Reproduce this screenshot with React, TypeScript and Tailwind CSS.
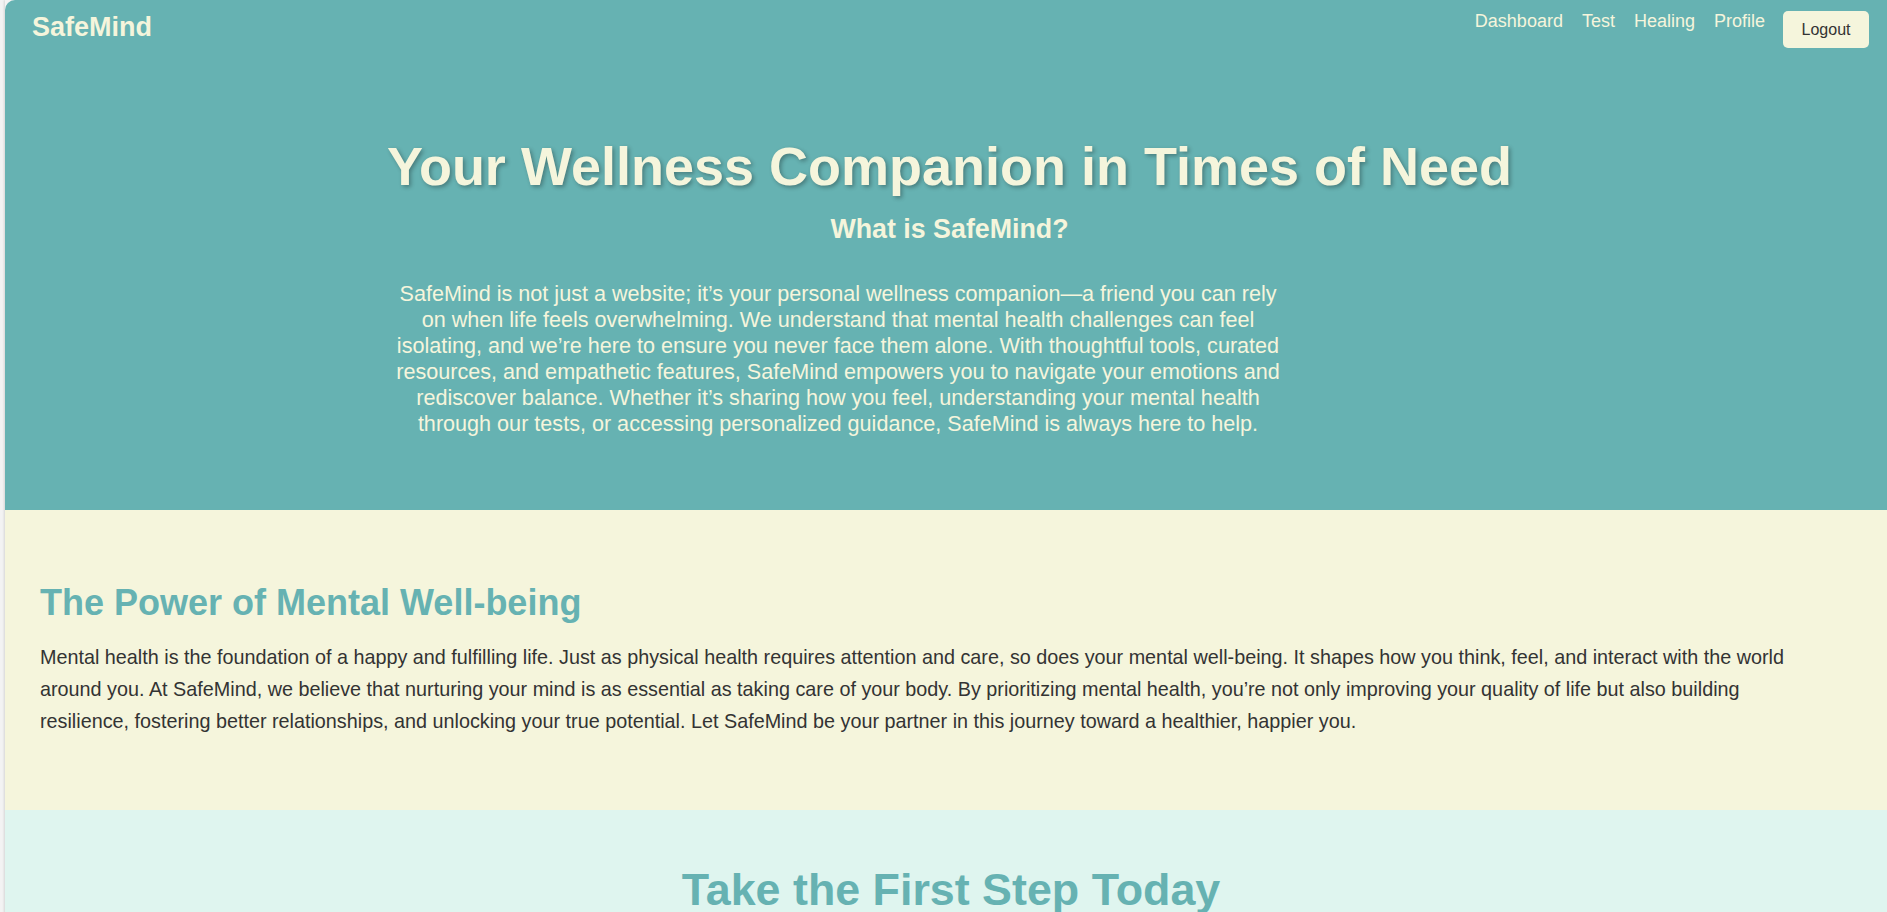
import React from 'react';

const navLinks = ['Dashboard', 'Test', 'Healing', 'Profile'];

const App = () => {
  return (
    <div className="min-h-screen bg-[#f3f3f3] pl-[5px] font-['Liberation_Sans',Arial,sans-serif]">
      <div className="shadow-[-1px_0_2px_rgba(0,0,0,0.12)]">
        {/* Hero + Nav */}
        <header className="bg-[#66b2b2] rounded-tl-[10px] pb-[73px]">
          <nav className="flex items-start justify-between pl-[27px] pr-[18px] pt-[11px]">
            <a href="#" className="text-[27px] font-bold text-[#f5f5dc] leading-[normal] mt-[1px]">
              SafeMind
            </a>
            <div className="flex items-start gap-[19px]">
              {navLinks.map((link) => (
                <a key={link} href="#" className="text-[18px] text-[#f5f5dc] leading-[normal]">
                  {link}
                </a>
              ))}
              <button className="w-[86px] h-[37px] flex items-center justify-center rounded-[5px] bg-[#f5f5dc] text-[16px] text-[#333] leading-[normal] -ml-[1px]">
                Logout
              </button>
            </div>
          </nav>

          <div className="flex flex-col items-center text-center text-[#f5f5dc] pl-[7px]">
            <h1 className="mt-[87px] text-[54px] font-bold leading-[normal] [text-shadow:2px_2px_4px_rgba(0,0,0,0.3)]">
              Your Wellness Companion in Times of Need
            </h1>
            <h2 className="mt-[17px] text-[26.8px] font-bold leading-[normal]">What is SafeMind?</h2>
          </div>

          <div className="flex justify-center">
            <p className="mt-[36px] mr-[216px] w-[900px] text-center text-[21.6px] leading-[26px] text-[#f5f5dc]">
              SafeMind is not just a website; it’s your personal wellness companion—a friend you can rely
              on when life feels overwhelming. We understand that mental health challenges can feel
              isolating, and we’re here to ensure you never face them alone. With thoughtful tools, curated
              resources, and empathetic features, SafeMind empowers you to navigate your emotions and
              rediscover balance. Whether it’s sharing how you feel, understanding your mental health
              through our tests, or accessing personalized guidance, SafeMind is always here to help.
            </p>
          </div>
        </header>

        {/* Mental well-being */}
        <section className="bg-[#f5f5dc] pl-[35px] pr-[81px] pt-[72px] pb-[73px]">
          <h2 className="text-[36px] font-bold leading-[normal] text-[#66b2b2]">The Power of Mental Well-being</h2>
          <p className="mt-[17px] text-[19.8px] leading-[32px] text-[#333]">
            Mental health is the foundation of a happy and fulfilling life. Just as physical health requires
            attention and care, so does your mental well-being. It shapes how you think, feel, and interact with
            the world around you. At SafeMind, we believe that nurturing your mind is as essential as taking care
            of your body. By prioritizing mental health, you’re not only improving your quality of life but also
            building resilience, fostering better relationships, and unlocking your true potential. Let SafeMind
            be your partner in this journey toward a healthier, happier you.
          </p>
        </section>

        {/* Call to action */}
        <section className="bg-[#dff5ef] pl-[10px] pt-[54px] pb-[72px] text-center">
          <h2 className="text-[44.8px] font-bold leading-[normal] text-[#66b2b2]">Take the First Step Today</h2>
          <p className="mt-[20px] text-[19.8px] leading-[32px] text-[#333]">
            Start your journey with a quick self-assessment and discover tools made for you.
          </p>
          <button className="mt-[24px] px-[24px] py-[12px] rounded-[5px] bg-[#66b2b2] text-[18px] text-[#f5f5dc]">
            Take the Test
          </button>
        </section>
      </div>
    </div>
  );
};

export default App;
